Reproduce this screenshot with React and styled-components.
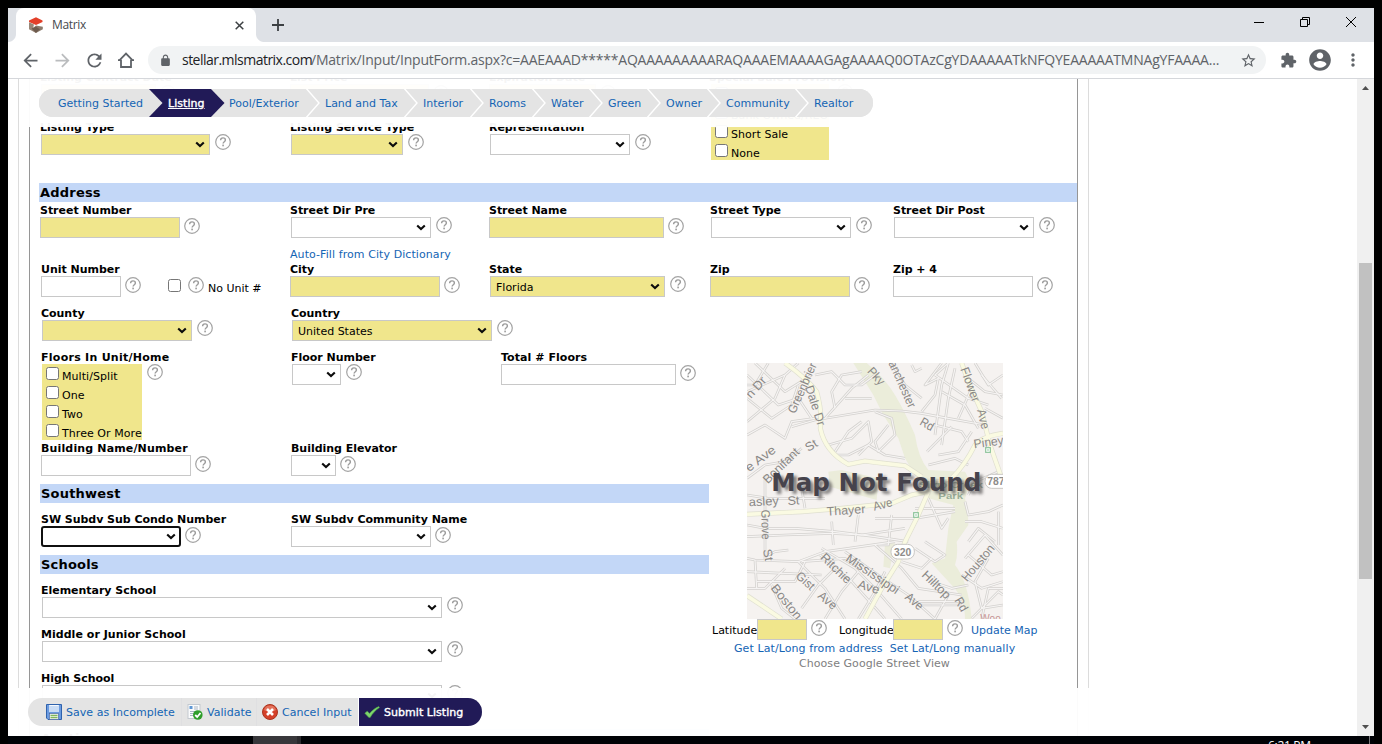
import React from "react";
import styled, { createGlobalStyle, css } from "styled-components";

const Global = createGlobalStyle`
  * { box-sizing: border-box; }
  html, body { margin: 0; padding: 0; background: #000; }
  body { font-family: Verdana, "DejaVu Sans", sans-serif; font-size: 11px; color: #000; }
`;

const LINK = "#1464b4";
const NAVY = "#211a57";
const KHAKI = "#f0e68c";

/* ---------- desktop and browser frame ---------- */
const Desktop = styled.div`
  width: 1382px; height: 744px; overflow: hidden; background: #000;
  padding: 8px 8px 0; display: flex; flex-direction: column;
`;
const Browser = styled.div`
  height: 728px; flex: none; background: #fff; display: flex; flex-direction: column; overflow: hidden;
  font-family: Verdana, "DejaVu Sans", sans-serif;
`;
const TabStrip = styled.div`
  height: 34px; flex: none; background: #dee1e6; display: flex; justify-content: space-between;
`;
const StripLeft = styled.div`display: flex;`;
const Flare = styled.div`
  width: 8px; height: 8px; align-self: flex-end;
  background: radial-gradient(circle at ${p => (p.$right ? "100% 0" : "0 0")}, #dee1e6 7.5px, #fff 8.5px);
`;
const Tab = styled.div`
  width: 240px; height: 34px; background: #fff; border-radius: 8px 8px 0 0;
  display: flex; align-items: center; padding: 0 12px;
`;
const TabTitle = styled.span`
  font: 12px "Open Sans", sans-serif; color: #45494d; flex: 1; margin: -2px 0 0 8px; letter-spacing: -0.35px;
`;
const NewTab = styled.div`margin: 11px 0 0 8px; height: 12px; line-height: 0;`;
const WinButtons = styled.div`
  display: flex; gap: 36px; padding: 9px 18px 0 0; height: 20px;
  svg { display: block; }
`;
const Toolbar = styled.div`
  height: 37px; flex: none; border-bottom: 1px solid #d5d7db; display: flex; align-items: center;
  padding: 0 0 0 11px;
`;
const ToolIcon = styled.span`
  width: ${p => p.$size || 22}px; height: ${p => p.$size || 22}px; display: grid; place-items: center;
  margin: 0 ${p => p.$gap ?? 10}px 0 ${p => p.$ml || 0}px; flex: none;
  svg { display: block; }
`;
const Omnibox = styled.div`
  width: 1118px; height: 28px; border-radius: 14px; background: #f1f3f4; margin-left: 1px; flex: none;
  display: flex; align-items: center; padding-left: 11px;
`;
const Url = styled.span`
  width: 1058px; margin: -1px 0 0 10px; white-space: nowrap; display: flex; flex: none;
  font: 14px "Open Sans", sans-serif; color: #5f6368;
`;
const Host = styled.span`color: #202124; letter-spacing: -0.52px; width: 129px; flex: none;`;
const Path = styled.span`letter-spacing: ${p => p.$ls}px;`;

/* ---------- page ---------- */
const Viewport = styled.div`position: relative; height: 657px; display: flex; flex: none;`;
const PageArea = styled.div`
  position: relative; width: 1349px; height: 657px; overflow: hidden; padding-left: 10px; background: #fff;
`;
const Sheet = styled.div`
  width: 1071px; height: 657px; border: 1px solid #dcdcdc; border-width: 0 1px; padding: 0 10px;
`;
const Panel = styled.div`
  width: 1049px; height: 657px; border: 1px solid #969696; border-width: 0 1px; overflow: hidden; padding-left: 9px;
`;
const Form = styled.div`margin-top: -8px;`;
const Scrollbar = styled.div`
  width: 17px; height: 657px; background: #f0f0f0; display: flex; flex-direction: column; align-items: center;
  justify-content: space-between; padding: 7px 0 7px;
`;
const Thumb = styled.div`width: 13px; height: 316px; background: #c1c1c1; margin-top: 173px;`;
const ScrollTop = styled.div`
  display: flex; flex-direction: column; align-items: center; height: 500px;
  svg { display: block; }
`;

const TopVeil = styled.div`
  position: absolute; left: 21px; top: 0; width: 1048px; height: 48px; padding: 10px 0 0 10px;
  background: rgba(255, 255, 255, 0.96);
`;
const BottomVeil = styled.div`
  position: absolute; left: 0; top: 609px; width: 1349px; height: 48px; padding: 10px 0 0 20px;
  background: rgba(255, 255, 255, 0.96);
`;
const Steps = styled.div`
  display: flex; width: 834px; height: 28px; border-radius: 14px; overflow: hidden; background: #e4e4e4;
`;
const Step = styled.div`
  width: ${p => p.$w}px; height: 28px; display: flex; align-items: center; flex: none;
  color: ${LINK}; background: #e4e4e4;
  svg { display: block; flex: none; }
  ${p => p.$active && css`
    background: ${NAVY}; color: #fff; text-decoration: underline; -webkit-text-stroke: 0.4px #fff; letter-spacing: 0.05px;
  `}
`;
const StepText = styled.span`
  white-space: nowrap; margin-left: ${p => p.$ml ?? 5}px;
`;
const Actions = styled.div`
  display: flex; width: 454px; height: 28px; border-radius: 14px; overflow: hidden; background: #e4e4e4;
`;
const Action = styled.div`
  width: ${p => p.$w}px; height: 28px; display: flex; align-items: center; padding-left: ${p => p.$pl}px; gap: 4px;
  color: ${LINK}; white-space: nowrap; flex: none; letter-spacing: 0.04px;
  border-right: 1px solid ${p => p.$edge || "#dfdfe1"};
  ${p => p.$main && css`background: ${NAVY}; color: #fff; -webkit-text-stroke: 0.4px #fff; border-right: 0;`}
  svg { display: block; flex: none; }
`;

/* ---------- form parts ---------- */
const Row = styled.div`
  display: flex; align-items: flex-start; height: ${p => p.$h}px; padding: ${p => p.$pt || 0}px 0 0 ${p => p.$pl ?? 1}px;
`;
const FieldBox = styled.div`width: ${p => p.$w}px; flex: none; display: flex; flex-direction: column;`;
const Label = styled.div`
  height: 13px; line-height: 13px; font-weight: bold; white-space: nowrap; letter-spacing: ${p => p.$ls ?? -0.03}px;
`;
const ControlLine = styled.div`
  display: flex; align-items: flex-start; padding-left: ${p => p.$shift}px; gap: ${p => p.$gap}px;
`;
const Box = styled.div`
  width: ${p => p.$w}px; height: 21px; border: 1px solid #c8c8c8; background: ${p => (p.$req ? KHAKI : "#fff")};
  display: flex; align-items: center; justify-content: space-between; padding: 0 4px 0 5px; white-space: nowrap; flex: none;
  ${p => p.$focus && css`border: 2px solid #101010; border-radius: 3px; padding: 0 3px 0 4px;`}
  svg { display: block; margin-left: auto; }
`;
const Value = styled.span`line-height: 13px; padding-top: 1px;`;
const HelpIcon = styled.span`
  display: block; width: 16px; height: 16px; margin-top: ${p => p.$drop}px; flex: none;
  svg { display: block; }
`;
const Band = styled.div`
  width: ${p => p.$w}px; height: 19px; line-height: 19px; background: #c3d7f7; font-weight: bold; font-size: 13px;
  padding-left: 1px; margin-left: ${p => p.$ml || 0}px; letter-spacing: ${p => p.$ls ?? 0.2}px;
`;
const Choices = styled.div`width: ${p => p.$w}px; background: ${KHAKI};`;
const Choice = styled.label`
  height: 19px; display: flex; align-items: flex-start; padding: 3px 0 0 4px; gap: 3px; white-space: nowrap;
  letter-spacing: 0.06px;
  span { line-height: 13px; margin-top: 3px; }
`;
const Check = styled.input.attrs({ type: "checkbox" })`
  appearance: none; width: 13px; height: 13px; margin: 0; flex: none; background: #fff;
  border: 1px solid #767676; border-radius: 2.5px;
`;
const NoUnit = styled.div`
  display: flex; align-items: flex-start; gap: 4px; margin-left: 23px; white-space: nowrap;
  ${Check} { margin: 3px 3px 0 0; }
  b { font-weight: normal; line-height: 13px; margin-top: 6px; }
`;
const Link = styled.a`color: ${p => p.$color || LINK}; white-space: nowrap; letter-spacing: ${p => p.$ls || 0}px;`;
const LinkLine = styled.div`
  height: ${p => p.$h}px; padding-left: ${p => p.$pl}px; line-height: 15px; display: flex; gap: 7px;
`;
const Split = styled.div`display: flex;`;
const LeftHalf = styled.div`width: 670px; flex: none;`;
const MapSide = styled.div`padding-top: 13px; width: 368px;`;
const MapFrame = styled.div`margin-left: 38px; width: 256px; height: 256px; svg { display: block; }`;
const CoordLine = styled.div`
  display: flex; align-items: flex-start; height: 22px; padding-left: 3px; line-height: 23px; white-space: nowrap;
`;
const Coord = styled.span`width: ${p => p.$w}px; flex: none;`;

const Taskbar = styled.div`
  height: 8px; flex: none; background: #000206; display: flex; overflow: hidden; padding-left: 245px;
`;
const TaskItem = styled.div`width: 48px; height: 8px; background: #37373b; border-right: 4px solid #29292d;`;
const Clock = styled.div`
  margin: 0 0 0 967px; width: 102px; font: 12px/20px "Open Sans", sans-serif; color: #fff; white-space: nowrap;
  border-right: 1px solid #77777a; height: 8px; letter-spacing: -0.3px;
`;

const Chevron = () => (
  <svg width="10" height="7" viewBox="0 0 10 7"><path d="M1.2 1.4 5 5 8.8 1.4" fill="none" stroke="#0c0c0c" strokeWidth="2.1" /></svg>
);
const Help = ({ drop = 0 }) => (
  <HelpIcon $drop={drop}>
    <svg width="16" height="16" viewBox="0 0 16 16">
      <circle cx="8" cy="8" r="7.3" fill="none" stroke="#a3a3a3" strokeWidth="1.2" />
      <path d="M5.6 6.3c0-1.5 1-2.4 2.4-2.4s2.4.9 2.4 2.1c0 1.7-2.3 1.8-2.3 3.6" fill="none" stroke="#9c9c9c" strokeWidth="1.4" />
      <rect x="7.3" y="10.6" width="1.6" height="1.7" fill="#9c9c9c" />
    </svg>
  </HelpIcon>
);

function Field({ w, label, cw, select, req, value, focus, shift = 0, gap, drop, ls, extra }) {
  const g = gap ?? (select ? 5 : 4);
  const d = drop ?? (select ? 0 : 1);
  return (
    <FieldBox $w={w}>
      <Label $ls={ls}>{label}</Label>
      <ControlLine $shift={shift} $gap={g}>
        <Box $w={cw} $req={req} $focus={focus}>
          {value && <Value>{value}</Value>}
          {select && <Chevron />}
        </Box>
        <Help drop={d} />
        {extra}
      </ControlLine>
    </FieldBox>
  );
}

const STEPS = [
  ["Getting Started", 110, 19], ["Listing", 62, 5], ["Pool/Exterior", 95, 4], ["Land and Tax", 98, 5],
  ["Interior", 66, 5], ["Rooms", 62, 5], ["Water", 57, 5], ["Green", 58, 5], ["Owner", 60, 5],
  ["Community", 88, 5], ["Realtor", 78, 5],
];
const StepArrow = ({ kind }) => (
  <svg width="14" height="28" viewBox="0 0 14 28">
    {kind === "line"
      ? <path d="M.3-.5 13 14 .3 28.5" fill="none" stroke="#fff" strokeWidth="1.4" />
      : <path d="M0 0 13.5 14 0 28z" fill={kind} />}
  </svg>
);

const SaveIcon = () => (
  <svg width="16" height="16" viewBox="0 0 16 16">
    <path d="M.5.5h15v15H2L.5 14z" fill="#6b9be0" stroke="#2f62ad" />
    <rect x="3" y="1" width="10" height="7" fill="#c9dcf5" /><path d="M3.5 1.5h9" stroke="#f4f8fd" />
    <rect x="3.5" y="9.5" width="9" height="6" fill="#f3f6f0" stroke="#41609a" strokeWidth=".6" />
    <path d="M4.5 11.5h7M4.5 13.7h7" stroke="#82b85c" strokeWidth="1.3" />
  </svg>
);
const ValidateIcon = () => (
  <svg width="16" height="16" viewBox="0 0 16 16">
    <rect x="1" y=".5" width="12" height="14" fill="#fafbfc" stroke="#c3c9d0" />
    <rect x="2.5" y="2" width="3" height="3" fill="#5f97d4" /><path d="M7 3h4M7 5h4M3 7.5h8M3 9.5h4M3 11.5h3" stroke="#a9b5c3" />
    <circle cx="10.8" cy="11" r="4.8" fill="#2f9e2b" /><path d="m8.2 11 2 2 3.3-4" fill="none" stroke="#fff" strokeWidth="1.8" />
  </svg>
);
const CancelIcon = () => (
  <svg width="16" height="16" viewBox="0 0 16 16">
    <circle cx="8" cy="8" r="7.5" fill="#d4412a" stroke="#a9351f" />
    <path d="M2 6a6.3 6.3 0 0 1 12 0c-3 2-9 2-12 0z" fill="#e2725c" />
    <path d="m5 5 6 6m0-6-6 6" stroke="#fff" strokeWidth="2.6" />
  </svg>
);
const TickIcon = () => (
  <svg width="16" height="16" viewBox="0 0 16 16">
    <path d="M.8 9.2 3.2 7.2l2.4 2.2C8 6.6 11 4 14.8 2.6L15.4 3.6C11.5 6.2 8.5 9.5 6.2 13.4L4.8 13.4z" fill="#7ed46c" stroke="#4da944" strokeWidth=".6" />
  </svg>
);
const MatrixLogo = () => (
  <svg width="16" height="16" viewBox="0 0 16 16">
    <path d="M8 .2 14.5 3.6V5L8 8 1 5V3.6z" fill="#e3402a" />
    <path d="M1 5.2 6 7.6 5.2 10.5 8 12.5V16L1 12.2z" fill="#978677" />
    <path d="M8 8.6 14.8 9.8V12.3L8 16 3.5 12.5z" fill="#8c7b6c" />
    <path d="M3.5 11.5 8 9.8 12 12.2 8 15.8z" fill="#6d5b4e" />
  </svg>
);

/* ---------- street map drawing ---------- */
const STREETS = [
  "M36 110 150 60 190 24", "M36 60 130 150 190 130 230 190", "M60 24 150 110 230 60", "M36 200 120 130 150 60", "M36 240 90 210 150 250 170 200 240 190",
  "M170 215 240 195 330 180 420 165 500 168 560 175 640 190 750 210", "M270 190 350 100 400 60", "M300 160 290 110 320 60 380 50", "M240 60 290 50 330 90 380 90 420 60",
  "M330 130 410 130", "M280 270 350 250 400 200 410 260 370 300", "M300 290 340 230 380 200", "M420 170 470 190 480 240 430 290 420 260 460 210", "M280 270 300 300 340 300 400 270 450 300 510 310",
  "M530 30 540 50 560 40", "M470 24 510 90 560 130", "M620 24 570 90 610 70 600 120 560 170", "M640 24 620 90 600 240", "M600 60 700 130 760 150", "M620 110 690 150 730 220", "M660 40 640 130 620 270",
  "M600 210 680 230 700 260", "M576 290 650 215", "M610 300 670 290 710 230", "M640 24 600 60", "M720 24 760 90 804 60", "M740 60 800 130", "M700 70 750 110 804 120", "M750 160 804 190", "M670 190 710 100",
  "M36 370 90 330 150 320 200 280", "M90 360 90 620", "M36 420 100 430 200 430 270 430", "M200 400 210 460", "M36 510 90 520 180 520 300 530 420 545 520 560", "M36 545 150 540 290 535 380 540 510 520",
  "M290 500 295 570", "M370 480 360 560", "M470 480 460 570 430 570", "M420 490 540 490 660 470", "M540 460 660 460", "M580 430 620 520 640 490", "M36 610 60 615 190 620 270 590 340 580 480 560",
  "M60 615 65 700", "M36 650 150 655 260 660", "M100 600 120 590 160 585", "M65 680 180 680 210 620", "M110 690 140 760 180 792", "M190 620 270 700 330 792", "M255 600 350 680 440 780 450 792",
  "M260 580 360 640 420 700 500 792", "M330 590 430 660 520 720 600 792", "M420 570 500 640 550 700 680 720", "M200 760 250 690 300 640", "M270 792 320 710 370 650", "M370 792 420 710 450 650", "M36 700 90 700 150 640",
  "M500 620 560 640 590 610", "M540 580 600 620 630 600 570 560", "M550 740 680 740", "M560 750 680 750", "M590 680 650 700 700 690", "M640 720 600 792", "M690 440 700 480 760 470 804 450",
  "M690 500 740 500 804 520", "M700 560 730 520 780 560", "M690 610 750 540 804 600", "M700 600 770 660 804 650", "M680 660 740 700 804 680", "M760 610 720 680 740 760 804 750", "M710 790 790 710 804 720", "M740 792 760 700 804 700",
  "M790 470 790 570", "M700 420 720 380 790 350", "M580 330 660 310 700 330", "M36 130 110 190 170 150 190 90", "M100 24 60 90 36 90", "M200 620 330 610 380 640",
];
const MAJOR = [
  "M150 24 Q215 70 245 110 Q262 170 256 220 Q270 290 340 328 L390 318 420 322 510 332 560 365",
  "M680 24 700 80 740 170 765 270 800 370", "M804 235 Q740 245 720 270 Q690 330 650 370 L590 385",
  "M36 478 200 470 300 462 470 445 530 420 580 410", "M580 410 550 480 510 560 490 620 440 700 390 792", "M36 722 140 792",
];
const MAP_LABELS = [
  ["Greenbrier", 180, 178, -66, 162], ["Dale Dr", 210, 96, 72, 125], ["n Dr", 48, 132, -48, 72], ["Pky", 395, 50, 48, 58],
  ["anchester", 460, 24, 66, 150], ["Rd", 552, 208, 30, 42], ["Flower", 676, 42, 70, 108], ["Ave", 726, 166, 76, 60], ["Piney", 718, 280, -8, 90],
  ["e Ave", 42, 352, -37, 104], ["Bonifant", 98, 388, -44, 136], ["St", 220, 291, -32, 36], ["asley", 42, 454, -3, 90], ["St", 158, 450, -3, 36],
  ["Thayer", 276, 482, -4, 116], ["Ave", 418, 467, -14, 58], ["Grove", 79, 464, 89, 90], ["St", 84, 584, 80, 36], ["Boston", 106, 700, 51, 124],
  ["Gist", 180, 666, 42, 62], ["Ave", 246, 726, 40, 62], ["Ritchie", 254, 610, 44, 112], ["Ave", 366, 698, 17, 66], ["Mississippi", 330, 616, 34, 184],
  ["Ave", 508, 730, 40, 58], ["Hilltop", 558, 662, 44, 104], ["Rd", 658, 736, 60, 42], ["Houston", 696, 682, -50, 132],
];
const StreetMap = () => (
  <svg width="256" height="256" viewBox="36 24 768 768" fontFamily="Liberation Sans, Arial, sans-serif">
    <rect x="36" y="24" width="768" height="768" fill="#f5f2f0" />
    <path d="M355 24H395Q450 70 480 120T540 240Q550 310 580 345L690 350Q710 380 690 430 700 470 700 510L665 560Q670 600 660 630 700 680 710 792H690Q690 730 650 690L590 625 630 610 640 520 655 450 580 430 545 370 510 310 490 250 445 180 415 120z" fill="#ebedda" />
    <path d="M280 350 320 345 430 370 425 435 285 395zM450 565H480L465 640 445 635z" fill="#ebecda" />
    {STREETS.map(d => <path key={d} d={d} fill="none" stroke="#d3d1ce" strokeWidth="8" strokeLinejoin="round" />)}
    {STREETS.map(d => <path key={d} d={d} fill="none" stroke="#f6f4f3" strokeWidth="3.5" strokeLinejoin="round" />)}
    {MAJOR.map(d => <path key={d} d={d} fill="none" stroke="#dfdfd0" strokeWidth="15" />)}
    {MAJOR.map(d => <path key={d} d={d} fill="none" stroke="#fafae2" strokeWidth="11" />)}
    {MAP_LABELS.map(([t, x, y, r, len]) => (
      <text key={t + x} x={x} y={y} transform={`rotate(${r} ${x} ${y})`} fontSize="37" fill="#8a8886" textLength={len} lengthAdjust="spacingAndGlyphs">{t}</text>
    ))}
    <text x="552" y="400" fontSize="29" fontWeight="bold" fill="#9aae98" textLength="192" lengthAdjust="spacingAndGlyphs">Sligo Creek</text>
    <text x="610" y="431" fontSize="29" fontWeight="bold" fill="#9aae98" textLength="74" lengthAdjust="spacingAndGlyphs">Park</text>
    <text x="736" y="802" fontSize="30" fill="#c69494">Woo</text>
    <rect x="468" y="568" width="70" height="44" rx="20" fill="#fff" stroke="#c9c7c4" strokeWidth="3" />
    <text x="503" y="602" fontSize="31" fontWeight="bold" fill="#8e8c8a" textAnchor="middle">320</text>
    <rect x="750" y="358" width="74" height="42" rx="20" fill="#fff" stroke="#c9c7c4" strokeWidth="3" />
    <text x="757" y="390" fontSize="31" fontWeight="bold" fill="#8e8c8a">787</text>
    {[[752, 278], [536, 473]].map(([x, y]) => (
      <g key={x}><rect x={x} y={y} width="14" height="14" fill="#fff" stroke="#8cc49a" strokeWidth="3.5" /><rect x={x + 5} y={y + 5} width="4" height="4" fill="#8cc49a" /></g>
    ))}
    <g fontFamily="Verdana, DejaVu Sans, sans-serif" fontWeight="bold" fontSize="73">
      <text x="119" y="416" textLength="630" lengthAdjust="spacingAndGlyphs" fill="#5d5a5a" opacity=".75" filter="blur(5px)">Map Not Found</text>
      <text x="109" y="407" textLength="630" lengthAdjust="spacingAndGlyphs" fill="#46434c">Map Not Found</text>
    </g>
  </svg>
);

const MI = ({ d, s = 20, c = "#5f6368" }) => (
  <svg width={s} height={s} viewBox="0 0 24 24" fill={c}><path d={d} /></svg>
);
const BACK = "M20 11H7.83l5.59-5.59L12 4l-8 8 8 8 1.41-1.41L7.83 13H20v-2z";
const FWD = "M12 4l-1.41 1.41L16.17 11H4v2h12.17l-5.58 5.59L12 20l8-8z";
const RELOAD = "M17.65 6.35C16.2 4.9 14.21 4 12 4c-4.42 0-7.99 3.58-7.99 8s3.57 8 7.99 8c3.73 0 6.84-2.55 7.73-6h-2.08c-.82 2.33-3.04 4-5.65 4-3.31 0-6-2.69-6-6s2.69-6 6-6c1.66 0 3.14.69 4.22 1.78L13 11h7V4l-2.35 2.35z";
const LOCK = "M18 8h-1V6c0-2.76-2.24-5-5-5S7 3.24 7 6v2H6c-1.1 0-2 .9-2 2v10c0 1.1.9 2 2 2h12c1.1 0 2-.9 2-2V10c0-1.1-.9-2-2-2zM9 6c0-1.66 1.34-3 3-3s3 1.34 3 3v2H9z";
const STAR = "M22 9.24l-7.19-.62L12 2 9.19 8.63 2 9.24l5.46 4.73L5.82 21 12 17.27 18.18 21l-1.63-7.03L22 9.24zM12 15.4l-3.76 2.27 1-4.28-3.32-2.88 4.38-.38L12 6.1l1.71 4.04 4.38.38-3.32 2.88 1 4.28L12 15.4z";
const PUZZLE = "M20.5 11H19V7c0-1.1-.9-2-2-2h-4V3.5C13 2.12 11.88 1 10.5 1S8 2.12 8 3.5V5H4c-1.1 0-1.99.9-1.99 2v3.8H3.5c1.49 0 2.7 1.21 2.7 2.7s-1.21 2.7-2.7 2.7H2V20c0 1.1.9 2 2 2h3.8v-1.5c0-1.49 1.21-2.7 2.7-2.7 1.49 0 2.7 1.21 2.7 2.7V22H17c1.1 0 2-.9 2-2v-4h1.5c1.38 0 2.5-1.12 2.5-2.5S21.88 11 20.5 11z";
const PERSON = "M12 2C6.48 2 2 6.48 2 12s4.48 10 10 10 10-4.48 10-10S17.52 2 12 2zm0 3c1.66 0 3 1.34 3 3s-1.34 3-3 3-3-1.34-3-3 1.34-3 3-3zm0 14.2c-2.5 0-4.71-1.28-6-3.22.03-1.99 4-3.08 6-3.08 1.99 0 5.97 1.09 6 3.08-1.29 1.94-3.5 3.22-6 3.22z";
const DOTS = "M12 8c1.1 0 2-.9 2-2s-.9-2-2-2-2 .9-2 2 .9 2 2 2zm0 2c-1.1 0-2 .9-2 2s.9 2 2 2 2-.9 2-2-.9-2-2-2zm0 6c-1.1 0-2 .9-2 2s.9 2 2 2 2-.9 2-2-.9-2-2-2z";

export default function App() {
  return (
    <Desktop>
      <Global />
      <Browser>
        <TabStrip>
          <StripLeft>
            <Flare />
            <Tab>
              <MatrixLogo />
              <TabTitle>Matrix</TabTitle>
              <svg width="9" height="9" viewBox="0 0 9 9"><path d="m.7.7 7.6 7.6m0-7.6L.7 8.3" stroke="#3c4043" strokeWidth="1.5" /></svg>
            </Tab>
            <Flare $right />
            <NewTab><svg width="13" height="13" viewBox="0 0 13 13"><path d="M6 0v12M0 6h12" stroke="#3c4043" strokeWidth="1.8" /></svg></NewTab>
          </StripLeft>
          <WinButtons>
            <svg width="10" height="11" viewBox="0 0 10 11"><path d="M0 5.5h10" stroke="#000" /></svg>
            <svg width="10" height="10" viewBox="0 0 10 10"><path d="M.5 2.5h7v7h-7zM2.5 2.5v-2h7v7h-2" fill="none" stroke="#000" /></svg>
            <svg width="10" height="10" viewBox="0 0 10 10"><path d="m0 0 10 10M10 0 0 10" stroke="#000" /></svg>
          </WinButtons>
        </TabStrip>
        <Toolbar>
          <ToolIcon><MI d={BACK} s={21} /></ToolIcon>
          <ToolIcon><MI d={FWD} s={21} c="#babcbe" /></ToolIcon>
          <ToolIcon><MI d={RELOAD} s={21} /></ToolIcon>
          <ToolIcon>
            <svg width="16" height="16" viewBox="0 0 16 16"><path d="M3 8V15h10V8M1.6 8.2 8 1.6l6.4 6.6M0 8.2h3.6m8.8 0H16" fill="none" stroke="#5f6368" strokeWidth="1.8" /></svg>
          </ToolIcon>
          <Omnibox>
            <MI d={LOCK} s={13} />
            <Url>
              <Host>stellar.mlsmatrix.com</Host>
              <Path $ls={-0.215}>/Matrix/Input/InputForm.aspx?c=AAEAAAD*****AQAAAAAAAAARAQAAAEMAAAAGAgAAAAQ0OTAzCgYDAAAAATkNFQYEAAAAATMNAgYFAAAA...</Path>
            </Url>
            <MI d={STAR} s={17} />
          </Omnibox>
          <ToolIcon $gap={8} $ml={11}><MI d={PUZZLE} s={17} /></ToolIcon>
          <ToolIcon $gap={9} $size={26}><MI d={PERSON} s={26} /></ToolIcon>
          <ToolIcon><MI d={DOTS} s={20} /></ToolIcon>
        </Toolbar>

        <Viewport>
          <PageArea>
            <Sheet>
              <Panel>
                <Form>
                  <Split>
                    <LeftHalf>
                      <Row $h={50}>
                        <Field w={250} label="Listing Contract Date" cw={115} req shift={1} />
                        <Field w={199} label="List Price" cw={139} req />
                        <Field w={221} label="Expiration Date" cw={107} req />
                      </Row>
                      <Row $h={62}>
                        <Field w={250} label="Listing Type" cw={169} req select shift={1} />
                        <Field w={199} label="Listing Service Type" cw={112} req select shift={1} ls={0} />
                        <Field w={221} label="Representation" cw={140} select shift={1} />
                      </Row>
                    </LeftHalf>
                    <FieldBox $w={180}>
                      <Label>Special Sale Provision</Label>
                      <ControlLine $shift={2} $gap={8}>
                        <Choices $w={118}>
                          <Choice><Check /></Choice>
                          <Choice><Check /><span>Bank Owned/REO</span></Choice>
                          <Choice><Check /><span>Short Sale</span></Choice>
                          <Choice><Check /><span>None</span></Choice>
                        </Choices>
                        <Help />
                      </ControlLine>
                    </FieldBox>
                  </Split>

                  <Band $w={1038}>Address</Band>
                  <Row $h={45} $pt={2}>
                    <Field w={250} label="Street Number" cw={140} req />
                    <Field w={199} label="Street Dir Pre" cw={140} select shift={1} />
                    <Field w={221} label="Street Name" cw={175} req />
                    <Field w={183} label="Street Type" cw={140} select shift={1} />
                    <Field w={140} label="Street Dir Post" cw={140} select shift={1} />
                  </Row>
                  <LinkLine $h={16} $pl={251}><Link $ls={0.08}>Auto-Fill from City Dictionary</Link></LinkLine>
                  <Row $h={44} $pl={2}>
                    <Field w={249} label="Unit Number" cw={80} extra={<NoUnit><Check /><Help drop={1} /><b>No Unit #</b></NoUnit>} />
                    <Field w={199} label="City" cw={150} req />
                    <Field w={221} label="State" cw={175} req select value="Florida" shift={1} />
                    <Field w={183} label="Zip" cw={140} req />
                    <Field w={140} label="Zip + 4" cw={140} />
                  </Row>
                  <Row $h={43} $pl={2}>
                    <Field w={250} label="County" cw={150} req select shift={1} />
                    <Field w={250} label="Country" cw={200} req select value="United States" shift={1} />
                  </Row>

                  <Split>
                    <LeftHalf>
                      <Row $h={92} $pt={1} $pl={2}>
                        <FieldBox $w={250}>
                          <Label $ls={0.27}>Floors In Unit/Home</Label>
                          <ControlLine $shift={1} $gap={5}>
                            <Choices $w={100}>
                              <Choice><Check /><span>Multi/Split</span></Choice>
                              <Choice><Check /><span>One</span></Choice>
                              <Choice><Check /><span>Two</span></Choice>
                              <Choice><Check /><span>Three Or More</span></Choice>
                            </Choices>
                            <Help />
                          </ControlLine>
                        </FieldBox>
                        <Field w={210} label="Floor Number" cw={49} select shift={1} />
                        <Field w={200} label="Total # Floors" cw={175} ls={0.06} />
                      </Row>
                      <Row $h={42} $pl={2}>
                        <Field w={250} label="Building Name/Number" cw={150} ls={0.15} />
                        <Field w={250} label="Building Elevator" cw={45} select gap={4} drop={1} />
                      </Row>
                      <Band $w={669} $ml={1}>Southwest</Band>
                      <Row $h={52} $pt={10} $pl={2}>
                        <Field w={250} label="SW Subdv Sub Condo Number" cw={140} select focus gap={4} drop={1} />
                        <Field w={250} label="SW Subdv Community Name" cw={140} select gap={4} drop={1} ls={0} />
                      </Row>
                      <Band $w={669} $ml={1}>Schools</Band>
                      <Row $h={54} $pt={10} $pl={2}><Field w={500} label="Elementary School" cw={400} select shift={1} /></Row>
                      <Row $h={44} $pl={2}><Field w={500} label="Middle or Junior School" cw={400} select shift={1} ls={0.04} /></Row>
                      <Row $h={57} $pl={2}><Field w={500} label="High School" cw={400} select shift={1} /></Row>
                      <Band $w={669} $ml={1}>Auction</Band>
                    </LeftHalf>
                    <MapSide>
                      <MapFrame><StreetMap /></MapFrame>
                      <CoordLine>
                        <Coord $w={45}>Latitude</Coord><Box $w={50} $req />
                        <Coord $w={4} /><Help drop={1} />
                        <Coord $w={12} /><Coord $w={54}>Longitude</Coord><Box $w={50} $req />
                        <Coord $w={4} /><Help drop={1} />
                        <Coord $w={8} /><Link>Update Map</Link>
                      </CoordLine>
                      <LinkLine $h={15} $pl={25}><Link $ls={0.09}>Get Lat/Long from address</Link><Link $ls={0.11}>Set Lat/Long manually</Link></LinkLine>
                      <LinkLine $h={15} $pl={90}><Link $color="#808080" $ls={0.06}>Choose Google Street View</Link></LinkLine>
                    </MapSide>
                  </Split>
                </Form>
              </Panel>
            </Sheet>

            <TopVeil>
              <Steps>
                {STEPS.map(([t, w, ml], i) => (
                  <Step key={t} $w={w} $active={i === 1}>
                    {i > 0 && <StepArrow kind={i === 1 ? "#e4e4e4" : i === 2 ? NAVY : "line"} />}
                    <StepText $ml={ml}>{t}</StepText>
                  </Step>
                ))}
              </Steps>
            </TopVeil>
            <BottomVeil>
              <Actions>
                <Action $w={154} $pl={18}><SaveIcon />Save as Incomplete</Action>
                <Action $w={75} $pl={5}><ValidateIcon />Validate</Action>
                <Action $w={102} $pl={5} $edge="#fff"><CancelIcon />Cancel Input</Action>
                <Action $w={123} $pl={5} $main><TickIcon />Submit Listing</Action>
              </Actions>
            </BottomVeil>
          </PageArea>
          <Scrollbar>
            <ScrollTop>
              <svg width="7" height="4" viewBox="0 0 7 4"><path d="M0 4 3.5 0 7 4z" fill="#505050" /></svg>
              <Thumb />
            </ScrollTop>
            <svg width="7" height="4" viewBox="0 0 7 4"><path d="M0 0h7L3.5 4z" fill="#505050" /></svg>
          </Scrollbar>
        </Viewport>
      </Browser>
      <Taskbar><TaskItem /><Clock>6:21 PM</Clock></Taskbar>
    </Desktop>
  );
}
